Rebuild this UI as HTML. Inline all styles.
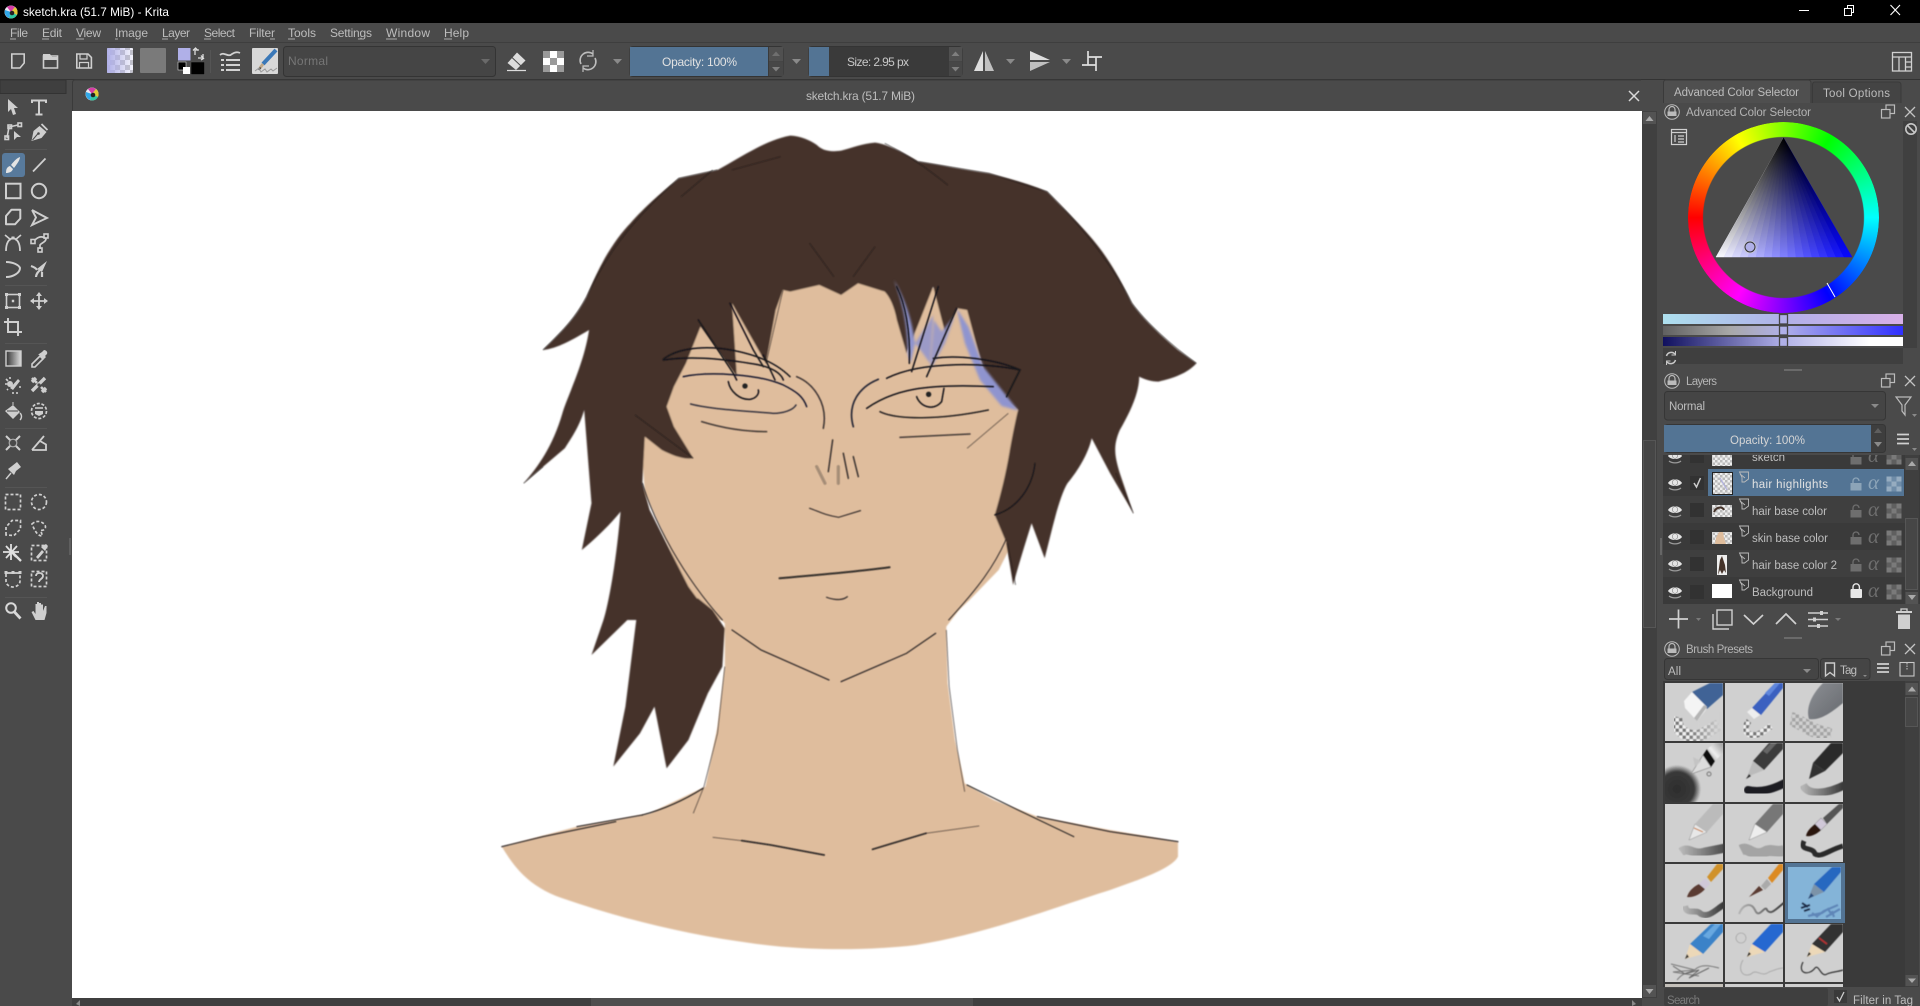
<!DOCTYPE html>
<html><head><meta charset="utf-8"><title>sketch.kra (51.7 MiB) - Krita</title>
<style>
html,body{margin:0;padding:0;width:1920px;height:1006px;overflow:hidden;background:#4a4a4a}
#s{position:absolute;left:0;top:0}
#wheel{position:absolute;left:1688px;top:121.7px;width:191.4px;height:191.4px;border-radius:50%;background:conic-gradient(from 30deg,#0f0 0deg,#0ff 60deg,#00f 120deg,#f0f 180deg,#f00 240deg,#ff0 300deg,#0f0 360deg);-webkit-mask:radial-gradient(circle,transparent 80px,#000 81px);mask:radial-gradient(circle,transparent 80px,#000 81px)}
#o{position:absolute;left:0;top:0}
text{font-family:"Liberation Sans",sans-serif;font-size:12px;fill:#bdbdbd}
.i{fill:none;stroke:#cfcfcf;stroke-width:1.6}
.f{fill:#cfcfcf;stroke:none}
.d{fill:none;stroke:#cfcfcf;stroke-width:1.7;stroke-dasharray:3 2}
.ln{fill:none;stroke:#17151a;stroke-width:1.5;vector-effect:non-scaling-stroke;stroke-linecap:round}
.th{fill:none;stroke:#1e1a1a;stroke-width:.9;vector-effect:non-scaling-stroke;opacity:.6}
.ar{fill:#8a8a8a}
</style></head><body>
<svg id="s" width="1920" height="1006" viewBox="0 0 1920 1006" xmlns="http://www.w3.org/2000/svg">
<defs>
<pattern id="ck" width="10" height="10" patternUnits="userSpaceOnUse"><rect width="10" height="10" fill="#fff"/><rect width="5" height="5" fill="#c4c4c4"/><rect x="5" y="5" width="5" height="5" fill="#c4c4c4"/></pattern>
<pattern id="ck2" width="5" height="5" patternUnits="userSpaceOnUse"><rect width="5" height="5" fill="#eee"/><rect width="2.5" height="2.5" fill="#bbb"/><rect x="2.5" y="2.5" width="2.5" height="2.5" fill="#bbb"/></pattern>
<pattern id="ck4" width="7" height="7" patternUnits="userSpaceOnUse"><rect width="7" height="7" fill="#f0f0f0"/><rect width="3.5" height="3.5" fill="#777"/><rect x="3.5" y="3.5" width="3.5" height="3.5" fill="#777"/></pattern>
<pattern id="ck5" width="7" height="7" patternUnits="userSpaceOnUse"><rect width="7" height="7" fill="#d0d0d0"/><rect width="3.5" height="3.5" fill="#a4a4a4"/><rect x="3.5" y="3.5" width="3.5" height="3.5" fill="#a4a4a4"/></pattern>
<linearGradient id="lav" x1="0" y1="0" x2="1" y2="0"><stop offset="0" stop-color="#b0b0e8"/><stop offset="1" stop-color="#b0b0e8" stop-opacity=".15"/></linearGradient>
<linearGradient id="gr" x1="0" y1="0" x2="1" y2="0"><stop offset="0" stop-color="#333"/><stop offset="1" stop-color="#ddd"/></linearGradient>
<linearGradient id="b1" x1="0" y1="0" x2="1" y2="0"><stop offset="0" stop-color="#aee0ee"/><stop offset=".5" stop-color="#b0b0e8"/><stop offset="1" stop-color="#d8b0e8"/></linearGradient>
<linearGradient id="b2" x1="0" y1="0" x2="1" y2="0"><stop offset="0" stop-color="#606060"/><stop offset=".28" stop-color="#a8a8a8"/><stop offset=".5" stop-color="#b0b0e8"/><stop offset="1" stop-color="#3030ff"/></linearGradient>
<linearGradient id="b3" x1="0" y1="0" x2="1" y2="0"><stop offset="0" stop-color="#10105e"/><stop offset=".5" stop-color="#b0b0e8"/><stop offset=".86" stop-color="#fff"/><stop offset="1" stop-color="#fff"/></linearGradient>
<linearGradient id="pm" x1="0" y1="1" x2="1" y2="0"><stop offset="0" stop-color="#888"/><stop offset=".45" stop-color="#eee"/><stop offset="1" stop-color="#999"/></linearGradient>
<linearGradient id="fade" x1="0" y1="0" x2="1" y2="0"><stop offset="0" stop-color="#b4b4b4"/><stop offset="1" stop-color="#333"/></linearGradient>
<linearGradient id="fd2" x1="0" y1="0" x2="1" y2="0"><stop offset="0" stop-color="#d0d0d0" stop-opacity="0"/><stop offset=".85" stop-color="#d0d0d0" stop-opacity=".9"/></linearGradient>
<linearGradient id="bl3" x1="0" y1="0" x2="1" y2="1"><stop offset="0" stop-color="#8c8f94"/><stop offset="1" stop-color="#66696e"/></linearGradient>
<radialGradient id="blob"><stop offset="0" stop-color="#2c2c2c"/><stop offset=".72" stop-color="#3a3a3a"/><stop offset="1" stop-color="#3a3a3a" stop-opacity="0"/></radialGradient>
<filter id="soft2" x="-5%" y="-5%" width="110%" height="110%"><feGaussianBlur stdDeviation=".8"/></filter>
<filter id="soft3" x="-10%" y="-10%" width="120%" height="120%"><feGaussianBlur stdDeviation="1.3"/></filter>
<filter id="sm" x="-5%" y="-5%" width="110%" height="110%"><feGaussianBlur stdDeviation=".55"/></filter>
<filter id="ti" x="-5%" y="-5%" width="110%" height="110%"><feGaussianBlur stdDeviation=".4"/></filter>
<g id="lock"><circle cx="0" cy="0" r="7.3" fill="none" stroke="#bbb" stroke-width="1"/><path d="M-3 -.5V-2.5A3 3 0 0 1 3 -2.5V-.5" fill="none" stroke="#bbb" stroke-width="1.2"/><rect x="-4.5" y="-.5" width="9" height="4.5" fill="#bbb"/></g>
<g id="flt"><rect x="-2" y="-7" width="8.5" height="8.5" fill="none" stroke="#bbb" stroke-width="1.2"/><rect x="-6.5" y="-2.5" width="8.5" height="8.5" fill="#4a4a4a" stroke="#bbb" stroke-width="1.2"/></g>
<g id="cl"><path d="M-5 -5L5 5M5 -5L-5 5" stroke="#c4c4c4" stroke-width="1.3" fill="none"/></g>
<g id="eye"><path d="M-7 0C-4 -5 4 -5 7 0C4 4 -4 4 -7 0Z" fill="#e4e4e4"/><circle r="2.8" cy="-.5" fill="#e4e4e4" stroke="#666" stroke-width=".5"/><path d="M-6 5C-3 7.5 3 7.5 6 5" stroke="#9a9a9a" stroke-width="1.2" fill="none"/></g>
<g id="tag"><path d="M-4.5 -5H4.5V2L0.5 5H-2V0.5Z" fill="none" stroke="#bbb" stroke-width=".9"/><path d="M-4 -3L1 1" stroke="#bbb" stroke-width=".9"/></g>
<g id="lk"><path d="M-3 -1V-3A3 3 0 0 1 3 -3" fill="none" stroke="#6e6e6e" stroke-width="1.3"/><rect x="-5.5" y="-1" width="11" height="7.5" fill="#6e6e6e"/></g>
<g id="al"><text x="-7" y="6" style="font-family:'Liberation Serif',serif;font-style:italic;font-size:21px;fill:#6e6e6e">α</text></g>
<g id="cb"><rect x="-7.5" y="-7.5" width="15" height="15" fill="#5f5f5f"/><rect x="-7.5" y="-7.5" width="5" height="5" fill="#7a7a7a"/><rect x="2.5" y="-7.5" width="5" height="5" fill="#7a7a7a"/><rect x="-2.5" y="-2.5" width="5" height="5" fill="#7a7a7a"/><rect x="-7.5" y="2.5" width="5" height="5" fill="#7a7a7a"/><rect x="2.5" y="2.5" width="5" height="5" fill="#7a7a7a"/></g>
<g id="logo"><circle r="6.5" fill="#e8e8f0"/><path d="M0 0L-4 -5A6.5 6.5 0 0 1 4 -5Z" fill="#d63ca6"/><path d="M0 0L4 -5A6.5 6.5 0 0 1 6 3Z" fill="#e0c838"/><path d="M0 0L6 3A6.5 6.5 0 0 1 -2 6Z" fill="#30c8a0"/><path d="M0 0L-2 6A6.5 6.5 0 0 1 -6 -2Z" fill="#30a8e8"/><circle r="2.3" cx="1" cy="1" fill="#222"/></g>
</defs>

<!-- base -->
<rect width="1920" height="1006" fill="#4a4a4a"/>
<rect width="1920" height="23" fill="#000"/>
<rect y="42" width="1920" height="1" fill="#3e3e3e"/>
<rect y="79" width="1920" height="1" fill="#333"/>

<!-- title bar -->
<use href="#logo" x="11" y="12"/>
<text x="23" y="16" textLength="146" lengthAdjust="spacingAndGlyphs" style="fill:#fff">sketch.kra (51.7 MiB)  - Krita</text>
<rect x="1799" y="10" width="10" height="1" fill="#fff"/>
<path d="M1847.5 8V5.5H1853.5V12.5H1851.5" fill="none" stroke="#fff" stroke-width="1"/>
<rect x="1844.5" y="8.5" width="7" height="7" fill="none" stroke="#fff"/>
<path d="M1890.5 5L1900 15M1900 5L1890.5 15" stroke="#fff" stroke-width="1.1" fill="none"/>

<!-- menu -->
<g style="fill:#bdbdbd">
<text x="10" y="37" textLength="18">File</text><rect x="10" y="38.5" width="6" height="1" fill="#aaa"/>
<text x="42" y="37" textLength="20">Edit</text><rect x="42" y="38.5" width="7" height="1" fill="#aaa"/>
<text x="76" y="37" textLength="25">View</text><rect x="76" y="38.5" width="8" height="1" fill="#aaa"/>
<text x="115" y="37" textLength="33">Image</text><rect x="115" y="38.5" width="3" height="1" fill="#aaa"/>
<text x="162" y="37" textLength="28">Layer</text><rect x="162" y="38.5" width="6" height="1" fill="#aaa"/>
<text x="204" y="37" textLength="31">Select</text><rect x="204" y="38.5" width="7" height="1" fill="#aaa"/>
<text x="249" y="37" textLength="26">Filter</text><rect x="270" y="38.5" width="5" height="1" fill="#aaa"/>
<text x="288" y="37" textLength="28">Tools</text><rect x="288" y="38.5" width="7" height="1" fill="#aaa"/>
<text x="330" y="37" textLength="42">Settings</text><rect x="358" y="38.5" width="6" height="1" fill="#aaa"/>
<text x="386" y="37" textLength="44">Window</text><rect x="386" y="38.5" width="11" height="1" fill="#aaa"/>
<text x="444" y="37" textLength="25">Help</text><rect x="444" y="38.5" width="8" height="1" fill="#aaa"/>
</g>

<!-- toolbar -->
<path class="i" d="M11.8 54H24.2V63L20 68H11.8Z"/>
<path class="i" d="M43.5 56H57.5V68H43.5Z"/><path class="f" d="M43 54H50L52 57H58V60H43Z"/>
<path class="i" d="M76.8 54H88L91.4 57.5V68H76.8Z" /><path class="i" d="M80 54V59H87V54M79.5 68V62.5H88.5V68" style="stroke-width:1.2"/>
<rect x="107" y="48" width="26" height="25" fill="url(#ck)" rx="1"/>
<rect x="107" y="48" width="26" height="25" fill="url(#lav)" rx="1"/>
<rect x="140" y="48" width="26" height="25" fill="#7a7a7a" rx="1"/>
<rect x="178" y="48" width="12.5" height="12.5" fill="#b0b0e8"/>
<path d="M195 55L195 50L199 50M193 50.5L195.5 48L198 50.5M203 54L203 58L198 58M201 55.5L203.5 58.5L201 60" fill="none" stroke="#ddd" stroke-width="1.3"/>
<rect x="178" y="62" width="8" height="8" fill="#000" stroke="#ddd" stroke-width=".6"/><rect x="183" y="67" width="7" height="7" fill="#fff"/>
<rect x="191" y="62" width="13.5" height="12.5" fill="#000" stroke="#555" stroke-width=".5"/>
<rect x="210" y="50" width="1" height="23" fill="#555"/>
<path d="M220 55C224 51 228 58 232 54C235 52 238 52 240 53" fill="none" stroke="#d2d2d2" stroke-width="1.8"/>
<path d="M221 60H224M226 60H240M221 65H224M226 65H240M221 70H224M226 70H240" stroke="#d2d2d2" stroke-width="1.9" fill="none"/>
<rect x="252" y="48" width="26" height="26" fill="#d8d8d8" rx="1"/>
<path d="M263 64L276 50" stroke="#3a78b8" stroke-width="4"/><path d="M263 64L260 68" stroke="#c0a888" stroke-width="3"/><path d="M260.5 67.5L259 70" stroke="#333" stroke-width="1.5"/>
<path d="M255 71L259 68L261 72L265 69L267 72L271 69L273 71L277 68" stroke="#9a9a9a" fill="none"/>
<rect x="283.5" y="46.5" width="212" height="30" rx="3" fill="#454545" stroke="#343434"/>
<text x="288" y="65" textLength="40" style="fill:#767676">Normal</text>
<path class="ar" d="M481 59H490L485.5 64Z" style="fill:#6a6a6a"/>
<path d="M507.5 63L517 52.5L525.5 60.5L516 70Z" fill="#dcdcdc"/><path d="M507 70.5H526" stroke="#dcdcdc" stroke-width="1.3"/><path d="M512 57.5L521 66" stroke="#4a4a4a" stroke-width="1"/>
<rect x="543" y="51" width="21" height="21" fill="#fff"/><path fill="#9a9a9a" d="M543 51h7v7h-7zM557 51h7v7h-7zM550 58h7v7h-7zM543 65h7v7h-7zM557 65h7v7h-7z"/>
<path d="M581 64A8 8 0 0 1 593 54M595 58A8 8 0 0 1 583 68" fill="none" stroke="#bdbdbd" stroke-width="1.6"/><path d="M593 50V56H587M583 72V66H589" fill="none" stroke="#bdbdbd" stroke-width="1.2"/>
<path class="ar" d="M613 59H622L617.5 64Z"/>
<rect x="630" y="46.5" width="153" height="30" rx="3" fill="#3a3a3a" stroke="#343434"/>
<rect x="630" y="47" width="138" height="29" fill="#537494"/>
<text x="662" y="66" textLength="75" style="fill:#e2e2e2">Opacity: 100%</text>
<rect x="769" y="47" width="14" height="14.5" fill="#505050"/><rect x="769" y="62" width="14" height="14" fill="#474747"/>
<path d="M772 56L776 51.5L780 56Z" fill="#6f6f6f"/><path d="M772 67H780L776 71.5Z" fill="#7f7f7f"/>
<path class="ar" d="M792 59H801L796.5 64Z"/>
<rect x="809" y="46.5" width="153" height="30" rx="3" fill="#3a3a3a" stroke="#343434"/>
<rect x="809" y="47" width="20" height="29" fill="#537494"/>
<text x="847" y="66" textLength="62" style="fill:#c8c8c8">Size: 2.95 px</text>
<rect x="949" y="47" width="13" height="14.5" fill="#505050"/><rect x="949" y="62" width="13" height="14" fill="#474747"/>
<path d="M951.5 56L955.5 51.5L959.5 56Z" fill="#7f7f7f"/><path d="M951.5 67H959.5L955.5 71.5Z" fill="#7f7f7f"/>
<path d="M983 51L974 71H983Z" fill="#dedede"/><path d="M985 51L994 71H985Z" fill="#c0c0c0"/>
<path class="ar" d="M1006 59H1015L1010.5 64Z"/>
<path d="M1030 51L1050 60H1030Z" fill="#dedede"/><path d="M1030 62L1050 62L1030 71Z" fill="#c0c0c0"/>
<path class="ar" d="M1062 59H1071L1066.5 64Z"/>
<path d="M1088 51V65M1082 65H1096M1088 57H1102M1096 57V71" fill="none" stroke="#dedede" stroke-width="1.7"/>
<g fill="none" stroke="#d0d0d0" stroke-width="1.3"><rect x="1892.5" y="52.5" width="19" height="18.5"/><path d="M1892.5 57H1911.5M1899 57V71M1905.5 57V71M1905.5 62H1911.5M1905.5 67H1911.5"/></g>

<!-- left box -->
<rect x="0" y="80" width="66" height="13.5" fill="#3f3f3f" stroke="#333"/>

<!-- toolbox separators -->
<g fill="#555"><rect x="5" y="149" width="42" height="1"/><rect x="5" y="285" width="42" height="1"/><rect x="5" y="343" width="42" height="1"/><rect x="5" y="428" width="42" height="1"/><rect x="5" y="487" width="42" height="1"/><rect x="5" y="597" width="42" height="1"/></g>
<rect x="2" y="153" width="23" height="24" rx="3" fill="#587a9c"/>

<!-- tools -->
<g transform="translate(13,107)"><path class="f" d="M-5 -8L5 1H1L3 7L0 8L-2 2L-5 5Z"/></g>
<g transform="translate(39,107)"><path class="i" d="M-7 -4V-6.5H7V-4M0 -6.5V7M-3.5 7.5H3.5" style="stroke-width:2"/></g>
<g transform="translate(13,132)"><path class="i" d="M-6 6L-4 -5L5 -7"/><rect x="-8" y="4" width="3.5" height="3.5" class="i"/><rect x="-5" y="-7" width="3.5" height="3.5" class="i"/><rect x="5" y="-9" width="3.5" height="3.5" class="i"/><path class="f" d="M1 -1L8 5H4L1 8Z"/></g>
<g transform="translate(38.5,132)"><path class="f" d="M-7 9L-5 -1L1 -6L8 0L3 6Z"/><path d="M-6 8L0 1" stroke="#4a4a4a"/><circle cx="0" cy="1.5" r="1.3" fill="#4a4a4a"/><path d="M3 -8L9 -2" stroke="#cfcfcf" stroke-width="1.8"/></g>
<g transform="translate(13,165)"><path d="M-7 8C-7 4 -6 2 -3 1L0 4C-1 7 -4 8 -7 8Z" fill="#e4e4e4"/><path d="M-2 0C1 -4 4 -7 7 -8C7 -5 4 -1 1 3Z" fill="#e4e4e4"/></g>
<g transform="translate(39,165)"><path d="M-6 6.5L6.5 -6.5" stroke="#cfcfcf" stroke-width="1.8"/></g>
<g transform="translate(13,191)"><rect x="-7" y="-7.3" width="14.5" height="14.5" fill="none" stroke="#cfcfcf" stroke-width="2"/></g>
<g transform="translate(39,191)"><circle r="7.2" fill="none" stroke="#cfcfcf" stroke-width="2"/></g>
<g transform="translate(13,217)"><path d="M-7 7.3V-1L-1.5 -7.3H7.3V1.5L2 7.3Z" fill="none" stroke="#cfcfcf" stroke-width="2" stroke-linejoin="round"/></g>
<g transform="translate(39,217)"><path d="M-7 -7L-3 0.5L-7 8L8 1L-7 -7" fill="none" stroke="#cfcfcf" stroke-width="1.9"/></g>
<g transform="translate(13,243)"><path d="M-7 8C-7 0 -4 -4 0 -5C4 -4 7 0 7 8" fill="none" stroke="#cfcfcf" stroke-width="1.8"/><path d="M-8 -8L-2 -3M8 -8L2 -3" stroke="#cfcfcf" stroke-width="1.6"/><rect x="-1.5" y="-6.5" width="3" height="3" fill="#cfcfcf"/></g>
<g transform="translate(39,243)"><path d="M-4 -3C0 -7 4 -7 7 -4C7 -1 2 0 1 2C1 4 1 5 1 6" fill="none" stroke="#cfcfcf" stroke-width="1.7"/><rect x="-8" y="-3.5" width="4" height="4" class="i"/><rect x="5" y="-9" width="4" height="4" class="i"/><rect x="-1" y="5" width="4" height="4" class="i"/></g>
<g transform="translate(13,269)"><path d="M-7 8C0 8 7 4 7 -1C6 -4 0 -7 -7 -7" fill="none" stroke="#cfcfcf" stroke-width="2"/></g>
<g transform="translate(39,269)"><path class="f" d="M-2 0L8 -8L3 3Z"/><path d="M-8 -3C-5 -2 -3 -1 -2 1M-3 8C-3 5 -1 3 1 1M3 8C3 6 3 4 3 3" stroke="#cfcfcf" stroke-width="2.2" fill="none"/></g>
<g transform="translate(13,301)"><rect x="-6.5" y="-6.5" width="13" height="13" fill="none" stroke="#cfcfcf" stroke-width="1.6"/><path fill="#cfcfcf" d="M-8 -8h3v3h-3zM5 -8h3v3h-3zM-8 5h3v3h-3zM5 5h3v3h-3zM-1.2 -1.2h2.4v2.4h-2.4z"/></g>
<g transform="translate(39,301)"><path d="M-8 0H8M0 -8V8" stroke="#cfcfcf" stroke-width="1.8"/><path class="f" d="M0 -9L3 -5H-3ZM0 9L3 5H-3ZM-9 0L-5 -3V3ZM9 0L5 -3V3Z"/></g>
<g transform="translate(13,327)"><path d="M-5 -9V5H9M-9 -5H5V9" fill="none" stroke="#cfcfcf" stroke-width="2"/></g>
<rect x="6" y="351" width="15" height="15" fill="url(#gr)" stroke="#cfcfcf" stroke-width="1.4"/>
<g transform="translate(39,359)"><path class="i" d="M-7 8L-7 5L1 -3L4 0L-4 8Z"/><path class="f" d="M0 -5L3 -7L5 -9C7 -9 9 -7 8 -5L6 -3L7 -2L5 0L-1 -5Z"/></g>
<g transform="translate(13,385)"><path class="f" d="M-3 3L5 -6L7 -4L0 5Z"/><path d="M-8 -1h2M-3 -8v2M4 7v2M-6 5l1 -1M-7 -6l2 2M6 2h2M0 7v2" stroke="#cfcfcf" stroke-width="1.6"/><circle cx="-3" cy="-1" r="3" class="f"/></g>
<g transform="translate(39,385)"><path d="M-7 6L6 -7M-7 -3L-3 -7M3 7L7 3" stroke="#cfcfcf" stroke-width="3.4"/><circle cx="0" cy="0" r="1.6" fill="#4a4a4a"/><path d="M-7 -7L-2 -2M2 2L7 7" stroke="#cfcfcf" stroke-width="2.6"/></g>
<g transform="translate(13,411)"><path class="f" d="M-8 0L0 -6L7 1L0 8Z"/><path d="M0 -6V-9" stroke="#cfcfcf"/><path d="M-6 0H5" stroke="#4a4a4a"/><path d="M7 2C9 4 9 7 7 9" stroke="#cfcfcf" stroke-width="1.4" fill="none"/></g>
<g transform="translate(39,411)"><circle r="7.5" fill="none" stroke="#cfcfcf" stroke-width="1.7" stroke-dasharray="3 1.7"/><path class="f" d="M-4 0H4V3L0 5L-4 3Z"/><path class="i" d="M-4 -3H4"/></g>
<g transform="translate(13,443)"><path d="M-7 -7L7 7M7 -7L-7 7" stroke="#cfcfcf" stroke-width="2"/><circle r="3.8" fill="#4a4a4a" stroke="#aaa" stroke-width="1.2"/></g>
<g transform="translate(39,443)"><path d="M-7 7L5 -7M-7 7H7V1.5L1 -2" fill="none" stroke="#cfcfcf" stroke-width="1.8"/></g>
<g transform="translate(13,471)"><path class="f" d="M-1 -5L4 -9L8 -4L3 0L1 4L-5 -2Z"/><path d="M-2 2L-7 8" stroke="#cfcfcf" stroke-width="1.4"/></g>
<g transform="translate(13,502)"><rect x="-7.5" y="-7.5" width="15" height="15" class="d"/></g>
<g transform="translate(39,502)"><circle r="7.5" class="d"/></g>
<g transform="translate(13,528)"><path class="d" d="M-7 7V-1L-1 -7.5H7.5V1L1 7.5Z"/></g>
<g transform="translate(39,528)"><path class="d" d="M-7 -4C-3 -8 3 -7 6 -3C8 1 4 3 2 2C2 5 4 8 3 8C-2 8 -5 1 -7 -4Z"/></g>
<g transform="translate(13,553)"><path d="M-1 -1L8 8" stroke="#e0e0e0" stroke-width="2.3"/><path d="M-2 -9V7M-10 -1H6M-7 -7L3 4M4 -7L-7 5" stroke="#e0e0e0" stroke-width="1.8"/></g>
<g transform="translate(39,553)"><rect x="-7.5" y="-7.5" width="15" height="15" class="d"/><path class="f" d="M-3 4L3 -3L5 -1L-1 6ZM2 -6L7 -9L9 -7L6 -2Z"/></g>
<g transform="translate(13,579)"><path class="d" d="M-7 -5V2C-7 6 -3 8 0 8C3 8 7 6 7 2V-5"/><path d="M-7 -6H7" stroke="#cfcfcf" stroke-width="1.8"/><path fill="#cfcfcf" d="M-8.5 -8h3v3h-3zM5.5 -8h3v3h-3zM-1.5 -8h3v3h-3z"/></g>
<g transform="translate(39,579)"><rect x="-7.5" y="-7.5" width="15" height="15" class="d"/><path d="M-3 -3C-3 -7 4 -7 4 -3C4 0 0 0 0 3" fill="none" stroke="#cfcfcf" stroke-width="1.8"/></g>
<g transform="translate(13,611)"><circle cx="-2" cy="-3" r="4.8" fill="none" stroke="#d8d8d8" stroke-width="2"/><path d="M1.5 1L7.5 7.5" stroke="#d8d8d8" stroke-width="2.8"/></g>
<g transform="translate(38.5,611)"><path class="f" d="M-7 1L-5 0L-3 3V-7H-1.5V-1V-9H0.5V-1V-8H2.5V-1V-6.5H4.5V0L6.5 -5H8V2L6 9H-3Z"/></g>
<g fill="#5f5f5f"><rect x="69" y="538" width="2" height="17"/></g>

<!-- canvas tab bar -->
<path d="M72.5 111V83Q72.5 80 75 80H1641" fill="#4a4a4a" stroke="#3a3a3a"/>
<use href="#logo" x="92" y="94"/>
<text x="806" y="100" textLength="109" style="fill:#bdbdbd">sketch.kra (51.7 MiB)</text>
<path d="M1629 91L1639 101M1639 91L1629 101" stroke="#d8d8d8" stroke-width="1.5"/>

<!-- canvas -->
<svg x="72" y="111" width="1570" height="887" viewBox="72 111 1570 887">
<rect x="72" y="111" width="1570" height="887" fill="#fff"/>
<g filter="url(#soft2)">
 <!-- skin -->
 <g transform="translate(480,120) scale(.4847,.3333)">
  <path fill="#dfbd9d" d="M610 480L870 480L1000 530L1110 800L1120 870L1110 1000L1100 1265L1070 1350L1010 1440L967 1500L470 1500L420 1380L340 1120L330 900L380 780L430 600L500 520Z"/>
 </g>
 <g transform="translate(480,600) scale(.4847,.3333)">
  <path fill="#dfbd9d" d="M450 -10L505 70L505 200L490 380L465 560L350 640L200 680L45 740C70 800 100 860 170 895C300 960 450 1015 620 1040C700 1050 800 1052 900 1035C1050 1000 1200 915 1300 870C1380 830 1430 800 1440 770L1440 725L1300 690L1150 650L1060 600L1000 550L980 420L965 250L962 80L1004 0L1010 -10Z"/>
 </g>
 <!-- hair -->
 <g transform="translate(480,120) scale(.4847,.3333)">
  <path fill="#45332a" d="M640 47C660 48 680 60 695 75C705 90 720 97 745 92C765 85 790 70 815 68C840 72 870 95 905 125C950 135 1000 150 1050 160C1090 175 1130 190 1170 215C1200 260 1230 300 1265 360C1300 420 1325 490 1345 550C1370 600 1400 640 1440 690L1478 730C1460 760 1430 775 1400 785C1385 785 1370 778 1360 770C1360 820 1340 880 1320 930C1305 980 1310 1010 1320 1060L1348 1180L1300 1060L1262 955C1255 1000 1235 1050 1212 1090C1195 1130 1180 1230 1165 1315L1138 1210C1125 1270 1110 1340 1100 1395L1085 1265L1062 1185C1075 1120 1085 1060 1092 1000C1098 950 1105 900 1110 870L1065 820L1040 760L1005 570L985 565L960 640L935 500L905 610L880 700L860 600C855 560 845 530 835 515L780 490L745 525L700 495L640 515L625 510L610 570L590 730L520 550L530 770L455 620L425 730L400 800L385 860L400 920L440 1015C420 1020 395 1005 375 990L340 950L335 1090L350 1170L395 1300L430 1400L480 1500L255 1500C265 1450 280 1340 290 1175C265 1220 235 1260 210 1290L230 1150L215 870C205 920 190 950 175 985L90 1090C120 1040 150 980 170 880C180 830 215 730 225 630C190 660 160 685 130 690C165 640 195 600 220 530C240 460 265 380 310 310C340 260 380 210 410 175L490 150C540 110 590 60 640 47Z"/>
 </g>
 <g transform="translate(480,600) scale(.4847,.3333)">
  <path fill="#45332a" d="M270 -5L330 -5L450 -5L480 30L505 85L500 200L470 280L430 420L385 505L360 320L330 400L275 500L300 320L325 30L230 165Z"/>
 </g>
</g>
<g filter="url(#soft3)">
 <g transform="translate(640,280) scale(.3333)">
  <path fill="#8f94cf" d="M762 0C790 50 815 110 825 190L812 250L803 220C803 130 785 60 762 0Z"/>
  <path fill="#8f94cf" opacity=".85" d="M825 190L880 105L870 250L845 215Z"/>
  <path fill="#8f94cf" opacity=".85" d="M882 120L905 155L945 105L915 190L870 270Z"/>
  <path fill="#8f94cf" d="M950 85L985 140L1030 260L1135 392L1085 378L1020 300L975 190Z"/>
 </g>
</g>
<g filter="url(#sm)">
 <g transform="translate(480,120) scale(.4847,.3333)">
  <path class="th" d="M130 690C165 640 195 600 220 530C250 440 290 330 410 175L490 150M835 70C870 95 905 125 965 195M905 125L1050 160L1170 215C1230 300 1300 420 1345 550C1370 600 1420 670 1478 730"/>
  <path class="th" d="M90 1090L130 1040M1312 1060L1348 1180M1105 1395L1088 1270M520 150L620 110M480 150L415 230M680 370L730 470M770 470L815 380"/>
  <path class="ln" style="stroke-width:1.1" d="M1062 1185C1110 1165 1140 1100 1145 1030"/>
  <path class="th" d="M1005 985L1090 880M320 885L440 1015M625 510L590 730"/>
  <path class="ln" style="opacity:.8;stroke-width:1.1" d="M335 1090C360 1210 420 1370 500 1500M1085 1260C1060 1340 1030 1400 967 1500"/>
 </g>
 <g transform="translate(480,600) scale(.4847,.3333)">
  <path class="ln" style="stroke-width:1.3;opacity:.8" d="M520 90L580 150L720 240M745 245L880 160L940 100M1150 650L1300 695L1440 725M45 740L130 710L280 665M200 680L335 645"/>
  <path class="th" d="M962 90L968 260L985 450L1000 575M505 200L490 400L462 560L440 640"/>
  <path class="ln" style="stroke-width:1.2;opacity:.85" d="M460 565Q400 620 335 645M1005 555L1110 630L1225 710"/>
  <path class="ln" style="stroke-width:1.8;opacity:.85" d="M540 722L600 735L710 765M810 748L920 700"/>
  <path class="th" d="M480 712L540 722M920 700L1030 678"/>
 </g>
 <g transform="translate(640,280) scale(.3333)">
  <path class="ln" d="M70 238C110 205 180 200 240 205C320 215 400 240 450 290M70 240C150 228 230 235 330 250C370 255 420 270 430 300"/>
  <path class="ln" style="stroke:#1c1c30" d="M130 290C200 275 350 280 430 315C470 335 490 350 500 380"/>
  <path class="ln" style="stroke:#2a2a38;opacity:.9" d="M152 372C220 390 350 395 400 400C430 400 460 390 468 375"/>
  <path class="ln" style="opacity:.75" d="M185 425C250 445 320 455 380 455"/>
  <path class="ln" d="M265 305C270 335 300 360 330 358C350 355 358 340 355 330"/>
  <circle cx="315" cy="318" r="8" fill="#222"/>
  <path class="ln" d="M270 70L340 210L370 260M175 120L280 280L290 300M370 225L405 300"/>
  <path class="ln" style="opacity:.8" d="M470 290C520 310 565 370 550 445"/>
  <path class="ln" style="stroke:#2a2a38;stroke-width:1.7" d="M715 298C660 320 620 370 640 440"/>
  <path class="ln" d="M680 385C760 330 850 310 1060 320"/>
  <path class="ln" d="M740 295C850 240 1050 250 1140 270L1100 350M880 235C950 225 1060 235 1140 270"/>
  <path class="ln" d="M830 350C840 380 880 395 905 365L912 325"/>
  <circle cx="866" cy="343" r="8" fill="#222"/>
  <path class="ln" style="opacity:.9" d="M720 395C770 420 900 420 1045 390"/>
  <path class="ln" style="opacity:.75" d="M780 472L990 462"/>
  <path class="ln" d="M770 20C795 70 812 150 808 250M815 275L895 20M860 290L950 85"/>
  <path class="ln" style="opacity:.8;stroke-width:1.5" d="M578 480L565 575M610 520L625 595M640 530L655 590"/>
  <path class="ln" style="opacity:.3;stroke-width:3" d="M530 560L555 610M595 560L595 610"/>
 </g>
 <g transform="translate(480,120) scale(.4847,.3333)">
  <path class="ln" style="stroke-width:1.2;opacity:.8" d="M680 1165C700 1175 710 1185 740 1192L785 1172"/>
  <path class="ln" style="stroke-width:2;opacity:.85" d="M618 1375C700 1365 780 1355 845 1342"/>
  <path class="ln" style="stroke-width:1.2;opacity:.8" d="M715 1432C735 1442 750 1440 758 1430"/>
 </g>
</g>
</svg>

<!-- canvas scrollbars -->
<rect x="72" y="998" width="1570" height="8" fill="#3f3f3f"/>
<rect x="591" y="998" width="382" height="8" fill="#4e4e4e"/>
<path d="M76 1004L80 1000V1006Z" fill="#888"/><path d="M1636 1004L1632 1000V1006Z" fill="#888"/>
<rect x="1642" y="111" width="15" height="887" fill="#404040"/>
<rect x="1643" y="112" width="13" height="12" fill="#535353"/><path d="M1645.5 121L1649.5 116L1653.5 121Z" fill="#aaa"/>
<rect x="1643.5" y="440.5" width="12" height="187" fill="#464646" stroke="#565656"/>
<rect x="1643" y="985" width="13" height="12" fill="#535353"/><path d="M1645.5 989H1653.5L1649.5 994Z" fill="#aaa"/>
<rect x="1660" y="538" width="2" height="17" fill="#666"/>

<!-- right dock: tabs -->
<path d="M1663.5 103V83Q1663.5 80 1666 80H1808Q1811 80 1811 83V103" fill="#4f4f4f" stroke="#3a3a3a"/>
<path d="M1812.5 103V85Q1812.5 82 1815 82H1898Q1901 82 1901 85V103" fill="#444" stroke="#3a3a3a"/>
<text x="1674" y="96" textLength="125" style="fill:#bdbdbd;font-size:11.5px">Advanced Color Selector</text>
<text x="1823" y="97" textLength="67" style="fill:#bdbdbd;font-size:11.5px">Tool Options</text>
<rect x="1663" y="103" width="257" height="903" fill="#4a4a4a"/>
<use href="#lock" x="1672" y="112"/>
<text x="1686" y="116" textLength="125" style="fill:#b4b4b4;font-size:11.5px">Advanced Color Selector</text>
<use href="#flt" x="1888" y="112"/><use href="#cl" x="1910" y="112"/>

<!-- color selector -->
<rect x="1903" y="121" width="14" height="227" fill="#404040"/>
<circle cx="1911" cy="129" r="5.2" fill="none" stroke="#c8c8c8" stroke-width="1.6"/><path d="M1907.5 125.5L1914.5 132.5" stroke="#c8c8c8" stroke-width="1.6"/>
<g fill="none" stroke="#d0d0d0" stroke-width="1.2"><rect x="1671.5" y="129.5" width="15" height="15"/><path d="M1671.5 132.5H1686.5M1675 135V142M1678 136H1684M1678 139H1684M1678 142H1684"/></g>
<rect x="1663" y="314" width="240" height="33" fill="#4a4a4a"/>
<rect x="1663" y="314" width="240" height="10" fill="url(#b1)"/>
<rect x="1663" y="326" width="240" height="9" fill="url(#b2)"/>
<rect x="1663" y="337" width="240" height="9" fill="url(#b3)"/>
<g fill="#b0b0e8" stroke="#444" stroke-width="1.3"><rect x="1779.5" y="314.5" width="8" height="9.5"/><rect x="1779.5" y="326" width="8" height="9"/><rect x="1779.5" y="337.5" width="8" height="9"/></g>
<rect x="1663" y="348" width="240" height="16" fill="#3f3f3f"/>
<path d="M1666.5 356A5 5 0 0 1 1675 354M1675.5 360A5 5 0 0 1 1667 362" fill="none" stroke="#c8c8c8" stroke-width="1.5"/><path d="M1675.5 351V355H1671.5M1666.5 365V361H1670.5" fill="none" stroke="#c8c8c8" stroke-width="1"/>
<g fill="#6a6a6a"><rect x="1784" y="369" width="18" height="2"/></g>

<!-- layers dock -->
<use href="#lock" x="1672" y="381"/>
<text x="1686" y="385" textLength="31" style="fill:#b4b4b4;font-size:11.5px">Layers</text>
<use href="#flt" x="1888" y="381"/><use href="#cl" x="1910" y="381"/>
<rect x="1664.5" y="391.5" width="221" height="28.5" rx="3" fill="#454545" stroke="#363636"/>
<text x="1669" y="410" textLength="36" style="fill:#bdbdbd;font-size:11.5px">Normal</text>
<path d="M1871 404H1879L1875 408Z" fill="#8a8a8a"/>
<path d="M1896 397H1911L1905 405V415L1902 411V405Z" fill="none" stroke="#bbb" stroke-width="1.2"/><path d="M1912 414H1917L1914.5 417Z" fill="#8a8a8a"/>
<rect x="1664.5" y="424.5" width="221" height="28" rx="3" fill="#3e3e3e" stroke="#363636"/>
<rect x="1664" y="425" width="207" height="27" fill="#537494"/>
<text x="1730" y="444" textLength="75" style="fill:#d5d5d5;font-size:11.5px">Opacity:  100%</text>
<path d="M1874 433L1878 428L1882 433Z" fill="#5f5f5f"/><path d="M1874 442H1882L1878 447Z" fill="#8a8a8a"/>
<path d="M1897 434.5H1909M1897 439H1909M1897 443.5H1909" stroke="#d0d0d0" stroke-width="1.8"/><path d="M1912 448H1917L1914.5 451Z" fill="#8a8a8a"/>
<!-- layer list -->
<svg x="1663" y="455" width="257" height="149" viewBox="1663 455 257 149">
<rect x="1663" y="455" width="257" height="149" fill="#3a3a3a"/>
<rect x="1663" y="496" width="242" height="27" fill="#3f3f3f"/><rect x="1663" y="550" width="242" height="27" fill="#3f3f3f"/>
<rect x="1708" y="469" width="196" height="27" fill="#537494"/>
<use href="#eye" x="1675" y="456"/><rect x="1690" y="449" width="14" height="14" fill="#323232"/>
<rect x="1712" y="448" width="20" height="18" fill="url(#ck2)"/>
<text x="1752" y="461" textLength="33" style="fill:#c0c0c0;font-size:11.5px">sketch</text>
<use href="#lk" x="1856" y="458"/><use href="#al" x="1875" y="456"/><use href="#cb" x="1894" y="457"/>
<g>
<use href="#eye" x="1675" y="483"/><rect x="1690" y="476" width="14" height="14" fill="#323232"/><path d="M1694 483L1696.5 487L1700.5 478" fill="none" stroke="#ccc" stroke-width="1.5"/>
<rect x="1712.5" y="472.5" width="20" height="22" fill="url(#ck2)" stroke="#222"/>
<path d="M1720 478L1727 490" stroke="#b0b0e0" stroke-width="1.2"/>
<use href="#tag" x="1744" y="477"/>
<text x="1752" y="488" textLength="76" style="fill:#e2e2e2;font-size:11.5px">hair highlights</text>
<path d="M1853 483V481A3 3 0 0 1 1859 481" fill="none" stroke="#8ca4b8" stroke-width="1.3"/><rect x="1850.5" y="483" width="11" height="7.5" fill="#8ca4b8"/>
<text x="1868" y="489" style="font-family:'Liberation Serif',serif;font-style:italic;font-size:21px;fill:#8ca4b8">α</text>
<rect x="1886.5" y="476.5" width="15" height="15" fill="#6f8ca8"/><path fill="#96acc0" d="M1886.5 476.5h5v5h-5zM1896.5 476.5h5v5h-5zM1891.5 481.5h5v5h-5zM1886.5 486.5h5v5h-5zM1896.5 486.5h5v5h-5z"/>
</g>
<g>
<use href="#eye" x="1675" y="510"/><rect x="1690" y="503" width="14" height="14" fill="#323232"/>
<rect x="1712" y="505" width="20" height="12" fill="url(#ck2)"/><path d="M1714 512C1716 507 1722 506 1724 510" stroke="#45332a" stroke-width="2" fill="none"/>
<use href="#tag" x="1744" y="504"/>
<text x="1752" y="515" textLength="75" style="fill:#bdbdbd;font-size:11.5px">hair base color</text>
<use href="#lk" x="1856" y="511"/><use href="#al" x="1875" y="510"/><use href="#cb" x="1894" y="511"/>
</g>
<g>
<use href="#eye" x="1675" y="537"/><rect x="1690" y="530" width="14" height="14" fill="#323232"/>
<rect x="1712" y="532" width="20" height="12" fill="url(#ck2)"/><path d="M1715 544L1716 538L1719 532H1723L1724 538L1726 544Z" fill="#dfbd9d"/>
<use href="#tag" x="1744" y="531"/>
<text x="1752" y="542" textLength="76" style="fill:#bdbdbd;font-size:11.5px">skin base color</text>
<use href="#lk" x="1856" y="538"/><use href="#al" x="1875" y="537"/><use href="#cb" x="1894" y="538"/>
</g>
<g>
<use href="#eye" x="1675" y="564"/><rect x="1690" y="557" width="14" height="14" fill="#323232"/>
<rect x="1717" y="555" width="10" height="20" fill="#eee"/><path d="M1718 575L1720 560L1722 556L1725 565L1726 573L1724 570L1722 574L1720 570Z" fill="#45332a"/>
<use href="#tag" x="1744" y="558"/>
<text x="1752" y="569" textLength="85" style="fill:#bdbdbd;font-size:11.5px">hair base color 2</text>
<use href="#lk" x="1856" y="565"/><use href="#al" x="1875" y="564"/><use href="#cb" x="1894" y="565"/>
</g>
<g>
<use href="#eye" x="1675" y="591"/><rect x="1690" y="585" width="14" height="14" fill="#323232"/>
<rect x="1712" y="584" width="20" height="14" fill="#fff"/>
<use href="#tag" x="1744" y="585"/>
<text x="1752" y="596" textLength="61" style="fill:#bdbdbd;font-size:11.5px">Background</text>
<path d="M1853 589V587A3.2 3.2 0 0 1 1859.4 587V589" fill="none" stroke="#e8e8e8" stroke-width="1.4"/><rect x="1850.5" y="589" width="11.5" height="9" fill="#e8e8e8" rx="1"/>
<use href="#al" x="1875" y="591"/><use href="#cb" x="1894" y="592"/>
</g>
<rect x="1905" y="455" width="14" height="149" fill="#3f3f3f"/>
<rect x="1905.5" y="458" width="12.5" height="12" fill="#535353"/><path d="M1908 466L1912 461L1916 466Z" fill="#aaa"/>
<rect x="1905.5" y="518.5" width="12" height="71" fill="#464646" stroke="#565656"/>
<rect x="1905.5" y="592" width="12.5" height="12" fill="#535353"/><path d="M1908 595H1916L1912 600Z" fill="#aaa"/>
</svg>
<!-- layer buttons -->
<path d="M1669 619H1688M1678.5 609.5V628.5" stroke="#d0d0d0" stroke-width="1.7"/>
<path d="M1696 618H1701L1698.5 621Z" fill="#7a7a7a"/>
<g fill="none" stroke="#d0d0d0" stroke-width="1.4"><rect x="1717" y="610" width="15" height="15"/><path d="M1713 614V629H1729"/><path d="M1744 615L1753.5 624L1763 615M1776 624L1786 614L1796 624" stroke-width="1.7"/></g>
<path d="M1808 613H1828M1808 619.5H1828M1808 626H1828" stroke="#d0d0d0" stroke-width="1.4"/><path fill="#d0d0d0" d="M1820 611h3v4h-3zM1813 617.5h3v4h-3zM1817 624h3v4h-3z"/>
<path d="M1835 618H1841L1838 621Z" fill="#7a7a7a"/>
<rect x="1896" y="611" width="16" height="2" fill="#d0d0d0"/><path d="M1901 611V609H1907V611" fill="none" stroke="#d0d0d0" stroke-width="1.3"/><path d="M1898 614.5H1910V629H1898Z" fill="#d0d0d0"/>
<rect x="1784" y="637" width="18" height="2" fill="#6a6a6a"/>

<!-- Brush presets -->
<use href="#lock" x="1672" y="649"/>
<text x="1686" y="653" textLength="67" style="fill:#b4b4b4;font-size:11.5px">Brush Presets</text>
<use href="#flt" x="1888" y="649"/><use href="#cl" x="1910" y="649"/>
<rect x="1664.5" y="658.5" width="154" height="21" rx="3" fill="#454545" stroke="#363636"/>
<text x="1668" y="675" textLength="13" style="fill:#bdbdbd;font-size:11.5px">All</text>
<path d="M1803 669H1811L1807 673Z" fill="#8a8a8a"/>
<rect x="1820.5" y="658.5" width="49.5" height="21" rx="3" fill="#454545" stroke="#363636"/>
<path d="M1825.5 663H1834.5V676L1830 672.5L1825.5 676Z" fill="none" stroke="#ccc" stroke-width="1.4"/>
<text x="1840" y="674" textLength="17" style="fill:#bdbdbd;font-size:11.5px">Tag</text>
<path d="M1863 675H1867L1865 677Z" fill="#8a8a8a"/>
<path d="M1877 664H1889M1877 668H1889M1877 672H1889" stroke="#d0d0d0" stroke-width="1.8"/>
<rect x="1900" y="662.5" width="14" height="13.5" fill="none" stroke="#c8c8c8" stroke-width="1.1"/><path d="M1907 663V670" stroke="#c8c8c8" stroke-dasharray="1.5 1"/>

<rect x="1663" y="681" width="242" height="306" fill="#3a3a3a"/>
<rect x="1905" y="681" width="14" height="306" fill="#3f3f3f"/>
<rect x="1905.5" y="683" width="12.5" height="12" fill="#535353"/><path d="M1908 691.5L1912 686.5L1916 691.5Z" fill="#aaa"/>
<rect x="1905.5" y="697.5" width="12" height="29" fill="#464646" stroke="#565656"/>
<rect x="1905.5" y="975" width="12.5" height="11" fill="#535353"/><path d="M1908 978.5H1916L1912 983Z" fill="#aaa"/>

<!-- tile backgrounds -->
<g fill="#d0d0d0">
<rect x="1665" y="683" width="58" height="58"/><rect x="1725" y="683" width="58" height="58"/><rect x="1785" y="683" width="58" height="58"/>
<rect x="1665" y="743" width="58" height="59"/><rect x="1725" y="743" width="58" height="59"/><rect x="1785" y="743" width="58" height="59"/>
<rect x="1665" y="804" width="58" height="58"/><rect x="1725" y="804" width="58" height="58"/><rect x="1785" y="804" width="58" height="58"/>
<rect x="1665" y="864" width="58" height="58"/><rect x="1725" y="864" width="58" height="58"/>
<rect x="1665" y="924" width="58" height="58"/><rect x="1725" y="924" width="58" height="58"/><rect x="1785" y="924" width="58" height="58"/>
</g>
<rect x="1785" y="863" width="60" height="60" fill="#537494"/>
<!-- tile 1 -->
<svg x="1665" y="683" width="58" height="58" viewBox="0 0 58 58"><g filter="url(#ti)">
<path d="M12 34C9 48 26 58 38 51L54 42" fill="none" stroke="url(#ck4)" stroke-width="12"/>
<rect x="24" y="28" width="34" height="30" fill="url(#fd2)"/>
<path d="M27 9L45 0H58V12L42 26Z" fill="#3f6496"/><path d="M19 18L27 9L42 24L40 28L32 38L20 25Z" fill="#f4f4f4"/><path d="M42 24L32 38L29 35L39 22Z" fill="#b4b4b4"/></g></svg>
<!-- tile 2 -->
<svg x="1725" y="683" width="58" height="58" viewBox="0 0 58 58"><g filter="url(#ti)">
<path d="M24 38C15 48 25 56 36 50L46 43" fill="none" stroke="url(#ck4)" stroke-width="6"/>
<path d="M27 25L50 0H58V5L36 32Z" fill="#3a60c0"/><path d="M22 29L27 25L35 32L29 36Z" fill="#eee"/><path d="M40 10L50 0H55L44 13Z" fill="#5f86dc"/></g></svg>
<!-- tile 3 -->
<svg x="1785" y="683" width="58" height="58" viewBox="0 0 58 58"><g filter="url(#ti)">
<path d="M6 36C16 38 22 48 46 52" stroke="url(#ck5)" stroke-width="14" fill="none"/>
<path d="M24 36C20 22 30 8 38 0H58V20C48 28 36 38 24 36Z" fill="url(#bl3)"/></g></svg>
<!-- tile 4 -->
<svg x="1665" y="743" width="58" height="59" viewBox="0 0 58 59"><g filter="url(#ti)">
<circle cx="12" cy="46" r="24" fill="url(#blob)"/>
<path d="M42 6L50 0H58V10L50 18Z" fill="url(#pm)"/><path d="M26 31L38 12L46 24Z" fill="#dcdcdc" stroke="#777" stroke-width=".6"/><path d="M38 12L42 6L50 18L46 24Z" fill="#111"/><circle cx="44" cy="31" r="2" fill="none" stroke="#777"/><path d="M28 14L36 18L30 24Z" fill="#c4c4c4"/></g></svg>
<!-- tile 5 -->
<svg x="1725" y="743" width="58" height="59" viewBox="0 0 58 59"><g filter="url(#ti)">
<path d="M23 47C36 50 48 46 60 40" stroke="#1c1c20" stroke-width="8" fill="none" stroke-linecap="round"/>
<path d="M22 34L28 18L39 27Z" fill="#bbb"/><path d="M28 18L44 0H58V6L39 27Z" fill="#3a3a3a"/><path d="M38 8L46 0H52L42 11Z" fill="#666"/><path d="M21 36L24 31L26 33Z" fill="#222"/></g></svg>
<!-- tile 6 -->
<svg x="1785" y="743" width="58" height="59" viewBox="0 0 58 59"><g filter="url(#ti)">
<path d="M18 42C24 54 44 50 60 42" stroke="url(#fade)" stroke-width="8" fill="none"/>
<path d="M24 36L28 20L40 28Z" fill="#333"/><path d="M28 20L46 0H58V10L40 28Z" fill="#2a2a2a"/></g></svg>
<!-- tile 7 -->
<svg x="1665" y="804" width="58" height="58" viewBox="0 0 58 58"><g filter="url(#ti)">
<path d="M16 48C24 42 28 52 40 48L60 44" stroke="url(#fade)" stroke-width="9" fill="none" style="opacity:.85"/>
<path d="M24 36L30 20L42 28Z" fill="#e8e8e8" stroke="#888" stroke-width=".5"/><path d="M30 20L48 0H58V10L42 28Z" fill="#bbb"/><path d="M29 24L38 28" stroke="#c97a3c" stroke-width="1"/></g></svg>
<!-- tile 8 -->
<svg x="1725" y="804" width="58" height="58" viewBox="0 0 58 58"><g filter="url(#ti)">
<path d="M16 46C24 42 28 54 40 48C46 44 52 50 60 46" stroke="#999" stroke-width="11" fill="none" opacity=".8"/>
<path d="M24 36L30 20L42 28Z" fill="#eee" stroke="#888" stroke-width=".5"/><path d="M30 20L48 0H58V10L42 28Z" fill="#777"/></g></svg>
<!-- tile 9 -->
<svg x="1785" y="804" width="58" height="58" viewBox="0 0 58 58"><g filter="url(#ti)">
<path d="M19 37C14 48 28 42 30 50C36 54 44 46 58 42" stroke="#2a2a2a" stroke-width="5" fill="none"/>
<path d="M21 32C22 26 28 22 30 20L36 26C32 30 26 33 21 32Z" fill="#2a1410"/><path d="M30 20L36 14L42 20L36 26Z" fill="#d0c8d8" stroke="#666" stroke-width=".5"/><path d="M38 14L54 0H58V4L42 20Z" fill="#555"/></g></svg>
<!-- tile 10 -->
<svg x="1665" y="864" width="58" height="58" viewBox="0 0 58 58"><g filter="url(#ti)">
<path d="M20 42C22 52 30 44 36 50C44 54 50 46 60 40" stroke="url(#fade)" stroke-width="6" fill="none"/>
<path d="M22 33C24 26 30 22 34 20L40 25C36 30 28 34 22 33Z" fill="#5a3a30"/><path d="M34 20L40 14L45 20L40 25Z" fill="#cfc8d8"/><path d="M42 13L52 0H58V5L46 18Z" fill="#d0922c"/></g></svg>
<!-- tile 11 -->
<svg x="1725" y="864" width="58" height="58" viewBox="0 0 58 58"><g filter="url(#ti)">
<path d="M14 50C18 40 26 38 30 46C34 56 40 40 42 46C46 52 52 44 60 38" stroke="url(#fade)" stroke-width="2" fill="none"/>
<path d="M24 33L34 22L38 26Z" fill="#5a3a30"/><path d="M36 22L42 15L46 20L40 26Z" fill="#aaa"/><path d="M43 14L54 0H58V6L47 19Z" fill="#dc8a20"/></g></svg>
<!-- tile 12 selected -->
<svg x="1788" y="867" width="53" height="52" viewBox="0 0 53 52"><g filter="url(#ti)"><rect x="-2" y="-2" width="57" height="56" fill="#84b4d8"/>
<path d="M20 32L26 17L36 25Z" fill="#7c93a8"/><path d="M26 17L44 0H53V5L36 25Z" fill="#2868c0"/><path d="M20 32L23 26L26 29Z" fill="#254878"/>
<path d="M14 36L20 40M13 41L22 38M16 44L22 42" stroke="#1a2c48" stroke-width="2"/>
<path d="M20 49L34 46L40 42L44 48M28 50L36 44L50 38M38 50L52 42M24 46L30 50M44 44L46 50" stroke="#5f86b8" stroke-width="2.2" fill="none"/></g></svg>
<!-- tile 13 -->
<svg x="1665" y="924" width="58" height="58" viewBox="0 0 58 58"><g filter="url(#ti)">
<path d="M6 40L30 46L8 48L34 52M12 56C20 46 26 50 32 44C38 40 46 42 54 44" stroke="#777" stroke-width="1" fill="none"/><path d="M8 42L20 50L34 46L24 54L44 44" stroke="#666" fill="none"/>
<path d="M20 35L25 20L38 30Z" fill="#ecd8b8"/><path d="M20 35L22 30L24 33Z" fill="#333"/><path d="M25 20L46 0H58V8L38 30Z" fill="#3a82c8"/><path d="M38 12L50 0H56L44 15Z" fill="#68a8e0"/></g></svg>
<!-- tile 14 -->
<svg x="1725" y="924" width="58" height="58" viewBox="0 0 58 58"><g filter="url(#ti)">
<circle cx="16" cy="14" r="5" fill="none" stroke="#999" stroke-width=".6"/>
<path d="M18 36C12 46 18 54 26 50C32 44 36 54 44 48C50 46 54 44 58 44" stroke="#aaa" stroke-width="1" fill="none"/>
<path d="M22 33L27 20L40 28Z" fill="#ecd8b8"/><path d="M22 33L24 28L26 30Z" fill="#222"/><path d="M27 20L46 0H58V8L40 28Z" fill="#2868d0"/></g></svg>
<!-- tile 15 -->
<svg x="1785" y="924" width="58" height="58" viewBox="0 0 58 58"><g filter="url(#ti)">
<path d="M18 38C12 50 24 52 30 44C34 40 36 54 42 50C46 48 52 48 58 46" stroke="#333" stroke-width="1.2" fill="none"/>
<path d="M22 33L27 20L40 28Z" fill="#ecd8b8"/><path d="M22 33L24 28L26 30Z" fill="#222"/><path d="M27 20L46 0H58V8L40 28Z" fill="#333"/><path d="M34 14L42 20" stroke="#b83030" stroke-width="1.6"/></g></svg>
<!-- tile 16 row -->
<rect x="1665" y="984" width="58" height="3" fill="#c4c0ba"/><rect x="1725" y="984" width="58" height="3" fill="#cfcfcf"/><rect x="1785" y="984" width="58" height="3" fill="#cfcfcf"/>

<!-- search -->
<rect x="1664" y="988" width="164" height="18" fill="#3f3f3f" rx="2"/>
<text x="1667" y="1004" textLength="33" style="fill:#7a7a7a;font-size:11.5px">Search</text>
<rect x="1834" y="990" width="13" height="13" fill="#3a3a3a"/>
<path d="M1837 997L1839.5 1001L1844 992" fill="none" stroke="#ccc" stroke-width="1.3"/>
<text x="1853" y="1004" textLength="60" style="fill:#bdbdbd;font-size:11.5px">Filter in Tag</text>
</svg>

<div id="wheel"></div>
<svg id="o" width="1920" height="1006" viewBox="0 0 1920 1006" xmlns="http://www.w3.org/2000/svg" style="pointer-events:none">
<defs><linearGradient id="tb" gradientUnits="userSpaceOnUse" x1="0" y1="138" x2="0" y2="257"><stop offset="0" stop-color="#000"/><stop offset="1" stop-color="#000" stop-opacity="0"/></linearGradient></defs>
<g stroke-width=".5">
<path d="M1783.5 138L1716 257H1724Z" fill="#f8f8ff" stroke="#f8f8ff"/>
<path d="M1783.5 138L1724 257H1732Z" fill="#e8e8ff" stroke="#e8e8ff"/>
<path d="M1783.5 138L1732 257H1740Z" fill="#d9d9ff" stroke="#d9d9ff"/>
<path d="M1783.5 138L1740 257H1748Z" fill="#cacaff" stroke="#cacaff"/>
<path d="M1783.5 138L1748 257H1756Z" fill="#bbbbff" stroke="#bbbbff"/>
<path d="M1783.5 138L1756 257H1764Z" fill="#acacff" stroke="#acacff"/>
<path d="M1783.5 138L1764 257H1772Z" fill="#9d9dff" stroke="#9d9dff"/>
<path d="M1783.5 138L1772 257H1780Z" fill="#8e8eff" stroke="#8e8eff"/>
<path d="M1783.5 138L1780 257H1788Z" fill="#7f7fff" stroke="#7f7fff"/>
<path d="M1783.5 138L1788 257H1796Z" fill="#7070ff" stroke="#7070ff"/>
<path d="M1783.5 138L1796 257H1804Z" fill="#6161ff" stroke="#6161ff"/>
<path d="M1783.5 138L1804 257H1812Z" fill="#5252ff" stroke="#5252ff"/>
<path d="M1783.5 138L1812 257H1820Z" fill="#4343ff" stroke="#4343ff"/>
<path d="M1783.5 138L1820 257H1828Z" fill="#3434ff" stroke="#3434ff"/>
<path d="M1783.5 138L1828 257H1836Z" fill="#2525ff" stroke="#2525ff"/>
<path d="M1783.5 138L1836 257H1844Z" fill="#1616ff" stroke="#1616ff"/>
<path d="M1783.5 138L1844 257H1852Z" fill="#0707ff" stroke="#0707ff"/>
</g>
<path d="M1783.5 137.5L1716 257.2H1852Z" fill="url(#tb)"/>
<circle cx="1750" cy="247" r="5" fill="#b0b0e8" stroke="#333" stroke-width="1"/>
<circle cx="1750" cy="247" r="6" fill="none" stroke="#ccc" stroke-width=".6"/>
<path d="M1827 283L1835 297" stroke="#fff" stroke-width="1"/>
</svg>
</body></html>
